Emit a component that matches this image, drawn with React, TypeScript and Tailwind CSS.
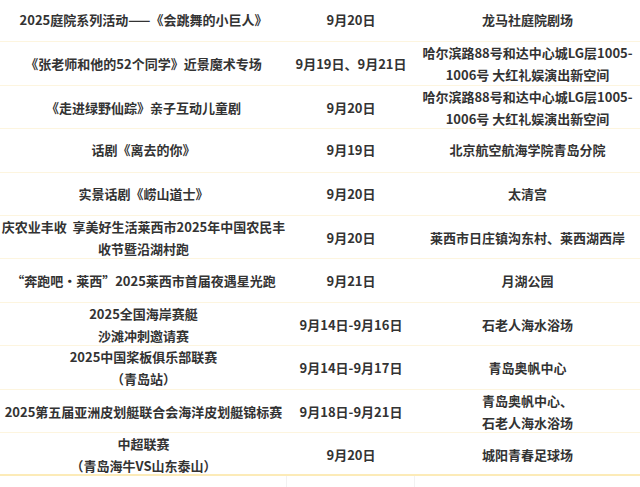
const ROWS: { name: string[]; date: string; place: string[] }[] = [
  { name: ["2025庭院系列活动——《会跳舞的小巨人》"], date: "9月20日", place: ["龙马社庭院剧场"] },
  {
    name: ["《张老师和他的52个同学》近景魔术专场"],
    date: "9月19日、9月21日",
    place: ["哈尔滨路88号和达中心城LG层1005-", "1006号 大红礼娱演出新空间"],
  },
  {
    name: ["《走进绿野仙踪》亲子互动儿童剧"],
    date: "9月20日",
    place: ["哈尔滨路88号和达中心城LG层1005-", "1006号 大红礼娱演出新空间"],
  },
  { name: ["话剧《离去的你》"], date: "9月19日", place: ["北京航空航海学院青岛分院"] },
  { name: ["实景话剧《崂山道士》"], date: "9月20日", place: ["太清宫"] },
  {
    name: ["庆农业丰收  享美好生活莱西市2025年中国农民丰", "收节暨沿湖村跑"],
    date: "9月20日",
    place: ["莱西市日庄镇沟东村、莱西湖西岸"],
  },
  { name: ["“奔跑吧・莱西”2025莱西市首届夜遇星光跑"], date: "9月21日", place: ["月湖公园"] },
  { name: ["2025全国海岸赛艇", "沙滩冲刺邀请赛"], date: "9月14日-9月16日", place: ["石老人海水浴场"] },
  { name: ["2025中国桨板俱乐部联赛", "（青岛站）"], date: "9月14日-9月17日", place: ["青岛奥帆中心"] },
  {
    name: ["2025第五届亚洲皮划艇联合会海洋皮划艇锦标赛"],
    date: "9月18日-9月21日",
    place: ["青岛奥帆中心、", "石老人海水浴场"],
  },
  { name: ["中超联赛", "（青岛海牛VS山东泰山）"], date: "9月20日", place: ["城阳青春足球场"] },
];

function Lines({ lines, align = "center" }: { lines: string[]; align?: "center" | "left" }) {
  return (
    <div className={align === "left" ? "text-left" : "text-center"}>
      {lines.map((l, i) => (
        <div key={i} className="whitespace-pre">
          {l}
        </div>
      ))}
    </div>
  );
}

export default function App() {
  return (
    <div
      className="h-[487px] w-[640px] overflow-hidden bg-white text-[13px] font-semibold leading-[22px] text-[#333]"
      style={{ fontFamily: '"Noto Sans CJK SC", "Noto Sans", sans-serif' }}
    >
      <div className="-mt-[1px]">
        {ROWS.map((row, i) => (
          <div
            key={i}
            className={`grid h-[43.4px] grid-cols-[287px_128px_225px] border-b ${
              i === ROWS.length - 1 ? "border-b-2 border-[#fcebb8]" : "border-[#fdf5df]"
            }`}
          >
            <div className="flex items-center justify-center px-[2px]">
              <Lines lines={row.name} />
            </div>
            <div className="flex items-center justify-center">
              <Lines lines={[row.date]} />
            </div>
            <div className="flex items-center justify-center">
              <Lines lines={row.place} align={row.place[0] === "青岛奥帆中心、" ? "left" : "center"} />
            </div>
          </div>
        ))}
        <div className="grid h-[20px] grid-cols-[287px_128px_225px]">
          <div className="border-r border-[#f2f2f2]" />
          <div className="border-r border-[#f2f2f2]" />
          <div />
        </div>
      </div>
    </div>
  );
}
